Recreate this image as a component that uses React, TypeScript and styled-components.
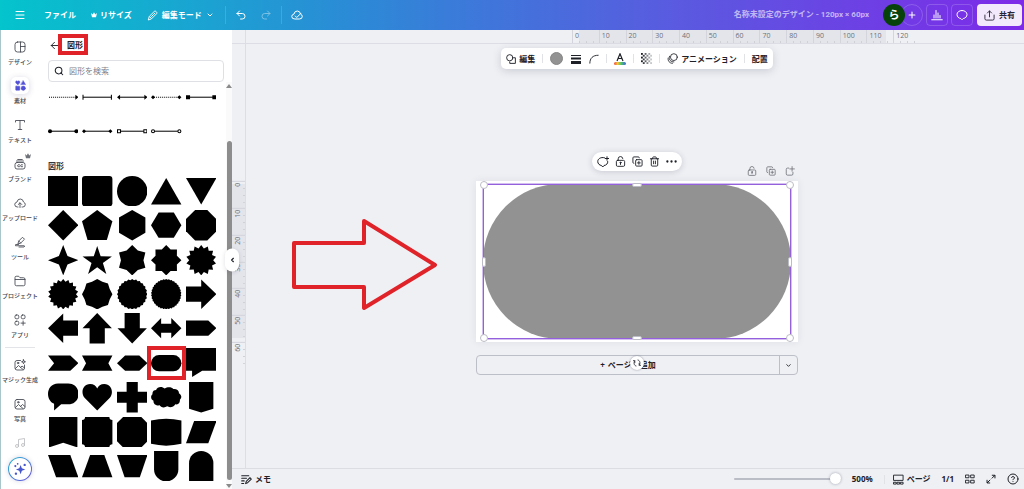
import React from "react";
import styled, { createGlobalStyle, css } from "styled-components";
import {
  ArrowLeft,
  ChevronDown,
  ChevronLeft,
  CircleHelp,
  CopyPlus,
  Menu,
  Music,
  Plus,
  Redo2,
  Search,
  Trash2,
  Undo2,
} from "lucide-react";

const GlobalStyle = createGlobalStyle`
  *, *::before, *::after { box-sizing: border-box; }
  html, body { margin: 0; padding: 0; }
  body {
    font-family: "Open Sans", "Noto Sans CJK JP", sans-serif;
    font-size: 8px;
    line-height: 10px;
    color: #1d2027;
    background: #eff0f4;
  }
  button, input { font: inherit; color: inherit; }
  svg { display: block; flex: none; }
`;

const RED = "#e02229";

/* ---------- shared ---------- */

const PlainButton = styled.button`
  display: flex;
  align-items: center;
  padding: 0;
  border: 0;
  background: none;
  white-space: nowrap;
  cursor: pointer;
`;

const Shell = styled.div`
  display: flex;
  flex-direction: column;
  height: 100vh;
  overflow: hidden;
`;

const Body = styled.div`
  display: flex;
  flex: 1;
  min-height: 0;
`;

type DrawProps = {
  size?: number;
  w?: number;
  fill?: string;
  children: React.ReactNode;
};

const Draw = ({ size = 12, w = 1.7, fill = "none", children }: DrawProps) => (
  <svg
    width={size}
    height={size}
    viewBox="0 0 24 24"
    fill={fill}
    stroke="currentColor"
    strokeWidth={w}
    strokeLinecap="round"
    strokeLinejoin="round"
    aria-hidden="true"
  >
    {children}
  </svg>
);

/* ---------- top bar ---------- */

const TopBar = styled.header`
  display: flex;
  align-items: center;
  flex: none;
  height: 30px;
  padding: 0 2px 0 14px;
  color: #fff;
  font-weight: 700;
  background: linear-gradient(90deg, #04c4cc 0%, #2b8bd6 34%, #5a5ae0 66%, #7d2ae8 100%);
`;

const MainMenu = styled.nav`
  display: flex;
  align-items: center;
  gap: 15px;
  margin-left: 18px;
`;

const MenuButton = styled(PlainButton)<{ $gap?: number }>`
  gap: ${(p) => p.$gap ?? 3}px;
`;

const BarGroup = styled.div`
  display: flex;
  align-items: center;
  gap: 13px;
  height: 18px;
  padding: 0 9px;
  border-left: 1px solid rgba(255, 255, 255, 0.15);
`;

const History = styled(BarGroup)`
  margin-left: 11px;
`;

const FadedButton = styled(PlainButton)`
  opacity: 0.4;
`;

const DocTitle = styled.div`
  margin-left: auto;
  color: rgba(255, 255, 255, 0.62);
  font-family: Roboto, "Noto Sans CJK JP", sans-serif;
  white-space: nowrap;
`;

const People = styled.div`
  display: flex;
  margin-left: 14px;
`;

const Avatar = styled.button`
  z-index: 1;
  width: 22px;
  height: 22px;
  padding: 0;
  border: 0;
  border-radius: 50%;
  color: #fff;
  background: #07420b;
  font-size: 11px;
  line-height: 20px;
`;

const AddPerson = styled(PlainButton)`
  justify-content: center;
  width: 22px;
  height: 22px;
  margin-left: -4px;
  border: 1px solid rgba(255, 255, 255, 0.18);
  border-radius: 50%;
`;

const SquareButton = styled(PlainButton)`
  justify-content: center;
  width: 22px;
  height: 22px;
  margin-left: 3px;
  border: 1px solid rgba(255, 255, 255, 0.18);
  border-radius: 4px;
`;

const ShareButton = styled(PlainButton)`
  justify-content: center;
  gap: 4px;
  width: 45px;
  height: 22px;
  margin-left: 4px;
  border-radius: 4px;
  color: #2a2536;
  background: #f2e9fd;
`;

const CrownMark = ({ size }: { size: number }) => (
  <svg width={size} height={size} viewBox="0 0 12 12" fill="currentColor" aria-hidden="true">
    <path d="M0 2 L3.400 5 L6 0.500 L8.600 5 L12 2 L10 10.500 H2 Z" />
  </svg>
);

const PencilMark = () => (
  <Draw size={11} w={2}>
    <path d="M3 21 L5 14 L16 3 Q18 1.500 20 3.500 L20.500 4 Q22.500 6 21 8 L10 19 Z" />
    <path d="M5 14 L10 19 M9 15 L17 7" />
  </Draw>
);

const LockMark = ({ size }: { size: number }) => (
  <Draw size={size} w={2}>
    <rect x="3" y="9.500" width="18" height="13" rx="2.500" />
    <path d="M7 9.500 V6 Q7 1.200 12 1.200 Q16.500 1.200 17 5.500 M12 18.500 V15" />
    <circle cx="12" cy="14.500" r="1.200" />
  </Draw>
);

const Header = () => (
  <TopBar>
    <PlainButton aria-label="メニュー">
      <Menu size={12} strokeWidth={2} />
    </PlainButton>
    <MainMenu>
      <MenuButton>ファイル</MenuButton>
      <MenuButton>
        <CrownMark size={6} />
        リサイズ
      </MenuButton>
      <MenuButton $gap={4}>
        <PencilMark />
        編集モード
        <ChevronDown size={8} strokeWidth={3} />
      </MenuButton>
    </MainMenu>
    <History>
      <PlainButton aria-label="元に戻す">
        <Undo2 size={12} />
      </PlainButton>
      <FadedButton aria-label="やり直し">
        <Redo2 size={12} />
      </FadedButton>
    </History>
    <BarGroup>
      <PlainButton aria-label="保存済み">
        <Draw size={12} w={2}>
          <path d="M7 20 Q1.500 20 1.500 15 Q1.500 11 6 10 Q7 4 12.500 4 Q18 4 19 10 Q22.500 11.500 22.500 15 Q22.500 20 17.500 20 Z" />
          <path d="M8.500 14 L11.500 17 L20 8.500" />
        </Draw>
      </PlainButton>
    </BarGroup>
    <DocTitle>名称未設定のデザイン - 120px × 60px</DocTitle>
    <People>
      <Avatar>ら</Avatar>
      <AddPerson aria-label="メンバーを追加">
        <Plus size={10} strokeWidth={2.5} />
      </AddPerson>
    </People>
    <SquareButton aria-label="分析">
      <Draw size={12} w={2}>
        <path d="M1.500 21.500 H22.500 M6 18 V12 M10 18 V3 M14 18 V8 M18 18 V13" />
      </Draw>
    </SquareButton>
    <SquareButton aria-label="コメント">
      <Draw size={12} w={2}>
        <path d="M12 3 C18 3 22 6.500 22 11 C22 15.500 18.500 18.500 14.500 19 L12 21.500 L9.500 19 C5.500 18.500 2 15.500 2 11 C2 6.500 6 3 12 3 Z" />
      </Draw>
    </SquareButton>
    <ShareButton>
      <Draw size={11} w={2}>
        <path d="M12 15 V2 M7.500 6.500 L12 2 L16.500 6.500 M2 11 V19 Q2 22 5 22 H19 Q22 22 22 19 V11" />
      </Draw>
      共有
    </ShareButton>
  </TopBar>
);

/* ---------- side rail ---------- */

const Rail = styled.nav`
  display: flex;
  flex-direction: column;
  align-items: center;
  flex: none;
  width: 40px;
  padding: 8px 1px 8px 0;
  border-left: 1px solid #a9c6ca;
  background: #fff;
`;

const RailList = styled.ul`
  display: flex;
  flex-direction: column;
  gap: 11px;
  flex: 1;
  min-height: 0;
  width: 100%;
  margin: 0;
  padding: 0;
  overflow: hidden;
  list-style: none;
`;

const RailDivider = styled.li`
  flex: none;
  height: 1px;
  margin: -3px 4px;
  background: #e3e4e8;
`;

const RailButton = styled.button<{ $faded?: boolean }>`
  display: flex;
  flex-direction: column;
  align-items: center;
  gap: 3px;
  width: 100%;
  height: 28px;
  padding: 0;
  border: 0;
  background: none;
  color: #41454e;
  font-size: 6px;
  font-weight: 500;
  line-height: 8px;
  white-space: nowrap;
  cursor: pointer;
  opacity: ${(p) => (p.$faded ? 0.35 : 1)};
`;

const RailIcon = styled.span<{ $active?: boolean }>`
  position: relative;
  display: grid;
  place-items: center;
  width: 18px;
  height: 18px;
  border-radius: 5px;
  ${(p) =>
    p.$active &&
    css`
      color: #5250d6;
      box-shadow: 0 1px 6px rgba(60, 60, 120, 0.2);
    `}
`;

const RailCrown = styled.span`
  position: absolute;
  top: -2px;
  right: -2px;
  opacity: 0.75;
`;

const MagicButton = styled.button`
  display: grid;
  place-items: center;
  flex: none;
  width: 24px;
  height: 24px;
  padding: 0;
  border: 1px solid transparent;
  border-radius: 50%;
  color: #4656cf;
  background:
    linear-gradient(#fff, #fff) padding-box,
    linear-gradient(135deg, #21b6d2, #6a4bd8) border-box;
  box-shadow: 0 0 5px rgba(60, 60, 120, 0.2);
`;

const railTop: { label: string; icon: React.ReactNode; active?: boolean; crown?: boolean }[] = [
  {
    label: "デザイン",
    icon: (
      <Draw>
        <rect x="2" y="2" width="20" height="20" rx="5" />
        <path d="M13 2 V22 M13 11 H22" />
      </Draw>
    ),
  },
  {
    label: "素材",
    active: true,
    icon: (
      <Draw size={11} w={1} fill="currentColor">
        <path d="M6 10.500 L2 6.500 Q0.500 4.500 2 2.500 Q4 1 6 3 Q8 1 10 2.500 Q11.500 4.500 10 6.500 Z" />
        <path d="M18 1.500 L23 10 H13 Z" />
        <rect x="1.500" y="13.500" width="9" height="9" rx="1" />
        <circle cx="18" cy="18" r="4.700" />
      </Draw>
    ),
  },
  {
    label: "テキスト",
    icon: (
      <Draw>
        <path d="M3 6 V3 H21 V6 M12 3 V21 M8.500 21 H15.500" />
      </Draw>
    ),
  },
  {
    label: "ブランド",
    crown: true,
    icon: (
      <Draw>
        <rect x="2" y="9" width="20" height="13" rx="4" />
        <path d="M5 6 H19 M7.500 3 H16.500 M11 13.500 Q7 12.500 7 15.500 Q7 18.500 11 17.500 M17 13.500 Q13 12.500 13 15.500 Q13 18.500 17 17.500" />
      </Draw>
    ),
  },
  {
    label: "アップロード",
    icon: (
      <Draw>
        <path d="M8 20 H7 Q1.500 20 1.500 15 Q1.500 11 6 10 Q7 4 12.500 4 Q18 4 19 10 Q22.500 11.500 22.500 15 Q22.500 20 17.500 20 H16 M12 21 V12 M8.500 15 L12 11.500 L15.500 15" />
      </Draw>
    ),
  },
  {
    label: "ツール",
    icon: (
      <Draw>
        <path d="M8 15 L9.500 10 L17 2.500 L21 6.500 L13.500 14 Z M9.500 10 L13.500 14 M9 17 Q2 16 2 18.500 Q2 20 8 19.500 H20 Q23 20 20 22 H10" />
      </Draw>
    ),
  },
  {
    label: "プロジェクト",
    icon: (
      <Draw>
        <path d="M2 9 V5 Q2 2.500 4.500 2.500 H8.500 Q10 2.500 11 4 L12 5.500 H19 Q22 5.500 22 8.500 V18.500 Q22 21.500 19 21.500 H5 Q2 21.500 2 18.500 V9 H22" />
      </Draw>
    ),
  },
  {
    label: "アプリ",
    icon: (
      <Draw>
        <rect x="2" y="2" width="7.500" height="7.500" rx="2.500" />
        <rect x="14.500" y="2" width="7.500" height="7.500" rx="2.500" />
        <rect x="2" y="14.500" width="7.500" height="7.500" rx="2.500" />
        <path d="M18.200 14 V22.500 M14 18.200 H22.500" />
      </Draw>
    ),
  },
];

const railBottom: { label: string; icon: React.ReactNode }[] = [
  {
    label: "マジック生成",
    icon: (
      <Draw>
        <path d="M13 3 H6 Q2 3 2 7 V18 Q2 22 6 22 H17 Q21 22 21 18 V12 M3 19 L9 13 L18 21 M13 17 L16 14 L21 18" />
        <path d="M19 1.500 L20 4.500 L23 5.500 L20 6.500 L19 9.500 L18 6.500 L15 5.500 L18 4.500 Z" />
        <circle cx="8" cy="8" r="1.500" />
      </Draw>
    ),
  },
  {
    label: "写真",
    icon: (
      <Draw>
        <rect x="2" y="3" width="20" height="19" rx="4" />
        <path d="M3 19 L9 13 L18 21 M13 17 L17 13 L22 17" />
        <circle cx="8.500" cy="8.500" r="1.500" />
      </Draw>
    ),
  },
];

const SideRail = () => (
  <Rail>
    <RailList>
      {railTop.map((item) => (
        <li key={item.label}>
          <RailButton>
            <RailIcon $active={item.active}>
              {item.icon}
              {item.crown && (
                <RailCrown>
                  <CrownMark size={6} />
                </RailCrown>
              )}
            </RailIcon>
            {item.label}
          </RailButton>
        </li>
      ))}
      <RailDivider />
      {railBottom.map((item) => (
        <li key={item.label}>
          <RailButton>
            <RailIcon>{item.icon}</RailIcon>
            {item.label}
          </RailButton>
        </li>
      ))}
      <li>
        <RailButton $faded aria-label="オーディオ">
          <RailIcon>
            <Music size={12} strokeWidth={1.7} />
          </RailIcon>
        </RailButton>
      </li>
    </RailList>
    <MagicButton aria-label="マジック">
      <Draw size={14} w={0} fill="currentColor">
        <path d="M13 5 L15.200 10.800 L21 13 L15.200 15.200 L13 21 L10.800 15.200 L5 13 L10.800 10.800 Z" />
        <circle cx="4" cy="7" r="1.800" />
        <circle cx="8" cy="3" r="1.500" />
        <circle cx="20" cy="5" r="2" />
        <circle cx="5" cy="20" r="2" />
      </Draw>
    </MagicButton>
  </Rail>
);

/* ---------- shapes panel ---------- */

const Panel = styled.aside`
  position: relative;
  display: flex;
  flex-direction: column;
  flex: none;
  width: 192px;
  background: #fff;
`;

const PanelHeader = styled.div`
  display: flex;
  align-items: center;
  gap: 7px;
  height: 30px;
  padding-left: 9px;
`;

const PanelTitle = styled.h2`
  position: relative;
  margin: 0;
  font-size: 8px;
  font-weight: 700;
`;

const HeaderMark = styled.span`
  position: absolute;
  inset: -6px -5px -5px -9px;
  border: 4px solid ${RED};
`;

const SearchBox = styled.label`
  display: flex;
  align-items: center;
  gap: 5px;
  flex: none;
  height: 22px;
  margin: 0 8px;
  padding: 0 5px;
  border: 1px solid #dfe0e5;
  border-radius: 4px;
`;

const SearchInput = styled.input`
  flex: 1;
  min-width: 0;
  padding: 0;
  border: 0;
  outline: 0;
  background: none;
  &::placeholder {
    color: #7d818b;
    opacity: 1;
  }
`;

const PanelScroll = styled.div`
  display: flex;
  flex: 1;
  min-height: 0;
`;

const PanelContent = styled.div`
  flex: 1;
  padding: 0 10px 0 8px;
  overflow: hidden;
`;

const ShapeGrid = styled.div`
  display: grid;
  grid-template-columns: repeat(5, 1fr);
  gap: 4px;
`;

const ShapeButton = styled.button`
  position: relative;
  aspect-ratio: 1;
  padding: 0;
  border: 0;
  background: none;
  color: #000;
  cursor: pointer;
  svg {
    width: 100%;
    height: 100%;
  }
`;

const ShapeMark = styled.span`
  position: absolute;
  inset: -2px -4px;
  border: 4px solid ${RED};
`;

const SectionTitle = styled.h3`
  margin: 14px 0 5px;
  color: #33363d;
  font-size: 8px;
  font-weight: 700;
`;

const ScrollBar = styled.div`
  display: flex;
  flex-direction: column;
  align-items: center;
  flex: none;
  width: 6px;
  padding: 2px 0 0;
  background: #fafafb;
  color: #8a8a8a;
`;

const ScrollThumb = styled.div`
  flex: 1;
  width: 5px;
  margin: 52px 0 4px;
  border-radius: 3px;
  background: #8d8d8d;
`;

const CollapseButton = styled(PlainButton)`
  position: absolute;
  z-index: 2;
  top: 50%;
  right: -7px;
  justify-content: center;
  width: 14px;
  height: 23px;
  border-radius: 7px;
  background: #fff;
  box-shadow: 0 1px 4px rgba(40, 40, 70, 0.15);
  transform: translateY(-50%);
`;

const star = (points: number, inner: number, radius = 15) =>
  Array.from({ length: points * 2 }, (_, i) => {
    const r = i % 2 ? radius * inner : radius;
    const a = (Math.PI * i) / points - Math.PI / 2;
    return `${(15 + r * Math.cos(a)).toFixed(2)},${(15 + r * Math.sin(a)).toFixed(2)}`;
  }).join(" ");

const poly = (points: string) => <polygon points={points} />;

const shapes: { name: string; body: React.ReactNode; marked?: boolean }[] = [
  { name: "正方形", body: <rect width="30" height="30" /> },
  { name: "角丸正方形", body: <rect width="30" height="30" rx="3" /> },
  { name: "円", body: <circle cx="15" cy="15" r="15" /> },
  { name: "三角形", body: poly("15,2 30,28 0,28") },
  { name: "逆三角形", body: poly("0,2 30,2 15,28") },
  { name: "ひし形", body: poly("15,0 30,15 15,30 0,15") },
  { name: "五角形", body: poly("15,0 30,11 24.500,29.500 5.500,29.500 0,11") },
  { name: "六角形", body: poly("15,0 28,7.500 28,22.500 15,30 2,22.500 2,7.500") },
  { name: "横六角形", body: poly("7.500,2.500 22.500,2.500 30,15 22.500,27.500 7.500,27.500 0,15") },
  { name: "八角形", body: poly("9,0 21,0 30,9 30,21 21,30 9,30 0,21 0,9") },
  { name: "四芒星", body: poly(star(4, 0.4)) },
  { name: "五芒星", body: poly("15,1 18.400,11.200 29.500,11.300 20.600,17.800 24,28.500 15,22 6,28.500 9.400,17.800 0.500,11.300 11.600,11.200") },
  { name: "六芒星", body: poly(star(6, 0.74)) },
  { name: "八芒星", body: poly(star(8, 0.76)) },
  { name: "十四芒星", body: poly(star(14, 0.79)) },
  { name: "十八芒星", body: poly(star(18, 0.84)) },
  { name: "八角星", body: poly(star(8, 0.89)) },
  { name: "バースト", body: poly(star(24, 0.93)) },
  { name: "シール", body: poly(star(34, 0.95)) },
  { name: "右矢印", body: poly("0,7.500 15,7.500 15,0.500 30,15 15,29.500 15,22.500 0,22.500") },
  { name: "左矢印", body: poly("30,7.500 15,7.500 15,0.500 0,15 15,29.500 15,22.500 30,22.500") },
  { name: "上矢印", body: poly("7.500,30 7.500,15 0.500,15 15,0 29.500,15 22.500,15 22.500,30") },
  { name: "下矢印", body: poly("7.500,0 7.500,15 0.500,15 15,30 29.500,15 22.500,15 22.500,0") },
  { name: "両矢印", body: poly("0,15 10,5 10,10.500 20,10.500 20,5 30,15 20,25 20,19.500 10,19.500 10,25") },
  { name: "ホームベース", body: poly("0,7.500 22,7.500 30,15 22,22.500 0,22.500") },
  { name: "シェブロン", body: poly("0,7.500 22,7.500 30,15 22,22.500 0,22.500 6,15") },
  { name: "リボン", body: poly("0,7.500 30,7.500 26,15 30,22.500 0,22.500 4,15") },
  { name: "細長い六角形", body: poly("0,15 8,7.500 22,7.500 30,15 22,22.500 8,22.500") },
  { name: "カプセル", marked: true, body: <rect y="7" width="30" height="16" rx="8" /> },
  { name: "四角い吹き出し", body: poly("0,0 30,0 30,22.500 16,22.500 6,28.500 6,22.500 0,22.500") },
  { name: "丸い吹き出し", body: <path d="M10 1.500 H20 C33.500 1.500 33.500 22 20 22 H13 L6 28 V21.500 C-3 18 -2 1.500 10 1.500 Z" /> },
  { name: "ハート", body: <path d="M15 28 L2.500 15.500 C-1.500 11 0.500 2 8 2 C11.500 2 14 4 15 6.500 C16 4 18.500 2 22 2 C29.500 2 31.500 11 27.500 15.500 Z" /> },
  { name: "十字", body: poly("9.500,0 20.500,0 20.500,9.500 30,9.500 30,20.500 20.500,20.500 20.500,30 9.500,30 9.500,20.500 0,20.500 0,9.500 9.500,9.500") },
  {
    name: "雲",
    body: (
      <path d="M5 8 C6 4.500 11 4 13.500 6.500 C16 4.500 20.500 4.500 22 7 C25 6.500 28 8.500 27.500 11 C30.500 12.500 30.500 16 28.500 17.500 C29 21 26 22.500 24 22 C22.500 25 18 25.500 16 24 C13 26 9.500 25 8.500 23 C5 23.500 2 21.500 2.500 18.500 C-0.500 17.500 -0.500 13 1.500 12 C1 9.500 3 8 5 8 Z" />
    ),
  },
  { name: "バナー", body: poly("3,0 27,0 27,26.500 15,30 3,26.500") },
  { name: "フラッグ", body: poly("1,0 29,0 29,30 15,25.500 1,30") },
  { name: "プレート", body: <path d="M3 0 H27 Q27 3 30 3 V27 Q27 27 27 30 H3 Q3 27 0 27 V3 Q3 3 3 0 Z" /> },
  { name: "角切り", body: poly("6,0 24,0 30,6 30,24 24,30 6,30 0,24 0,6") },
  { name: "たる", body: <path d="M0 3.500 Q15 0 30 3.500 V26.500 Q15 30 0 26.500 Z" /> },
  { name: "平行四辺形", body: poly("8,4 30,4 22,26 0,26") },
  { name: "逆平行四辺形", body: poly("0,4 22,4 30,26 8,26") },
  { name: "台形", body: poly("8,4 22,4 30,26 0,26") },
  { name: "逆台形", body: poly("0,4 30,4 22.500,26 7.500,26") },
  { name: "盾", body: <path d="M3 0 H27 V18 A12 12 0 0 1 3 18 Z" /> },
  { name: "アーチ", body: <path d="M3 30 V12 A12 12 0 0 1 27 12 V30 Z" /> },
];

const solid = <path d="M1 15 H29" stroke="currentColor" />;
const dotted = <path d="M1 15 H28" stroke="currentColor" strokeDasharray="1 1" />;

const lines: { name: string; body: React.ReactNode }[] = [
  { name: "点線矢印", body: <>{dotted}{poly("27,12.500 30,15 27,17.500")}</> },
  { name: "両端バー", body: <>{solid}<path d="M1 12.500 V17.500 M29 12.500 V17.500" stroke="currentColor" /></> },
  { name: "両端矢印", body: <>{solid}{poly("0,15 3,12.500 3,17.500")}{poly("30,15 27,12.500 27,17.500")}</> },
  { name: "点線ひし形", body: <>{dotted}{poly("0,15 2,13 4,15 2,17")}{poly("26,15 28,13 30,15 28,17")}</> },
  { name: "両端四角", body: <>{solid}<path d="M0 13 H4 V17 H0 Z M26 13 H30 V17 H26 Z" /></> },
  { name: "両端丸", body: <>{solid}<circle cx="2" cy="15" r="2" /><circle cx="28" cy="15" r="2" /></> },
  { name: "両端ひし形", body: <>{solid}{poly("0,15 2,13 4,15 2,17")}{poly("26,15 28,13 30,15 28,17")}</> },
  {
    name: "両端白四角",
    body: <>{solid}<path d="M0.500 13.500 H3.500 V16.500 H0.500 Z M26.500 13.500 H29.500 V16.500 H26.500 Z" fill="#fff" stroke="currentColor" /></>,
  },
  {
    name: "両端白丸",
    body: <>{solid}<g fill="#fff" stroke="currentColor"><circle cx="2" cy="15" r="1.500" /><circle cx="28" cy="15" r="1.500" /></g></>,
  },
];

const ShapesPanel = () => (
  <Panel>
    <PanelHeader>
      <PlainButton aria-label="戻る">
        <ArrowLeft size={11} strokeWidth={2} />
      </PlainButton>
      <PanelTitle>
        図形
        <HeaderMark />
      </PanelTitle>
    </PanelHeader>
    <SearchBox>
      <Search size={10} strokeWidth={2.5} />
      <SearchInput type="search" placeholder="図形を検索" aria-label="図形を検索" />
    </SearchBox>
    <PanelScroll>
      <PanelContent>
        <ShapeGrid>
          {lines.map((line) => (
            <ShapeButton key={line.name} aria-label={line.name}>
              <svg viewBox="0 0 30 30" fill="currentColor">{line.body}</svg>
            </ShapeButton>
          ))}
        </ShapeGrid>
        <SectionTitle>図形</SectionTitle>
        <ShapeGrid>
          {shapes.map((shape) => (
            <ShapeButton key={shape.name} aria-label={shape.name}>
              <svg viewBox="0 0 30 30" fill="currentColor">{shape.body}</svg>
              {shape.marked && <ShapeMark />}
            </ShapeButton>
          ))}
        </ShapeGrid>
      </PanelContent>
      <ScrollBar aria-hidden="true">
        <svg width="6" height="5" viewBox="0 0 6 5" fill="currentColor"><path d="M3 0 L6 4 H0 Z" /></svg>
        <ScrollThumb />
        <svg width="6" height="5" viewBox="0 0 6 5" fill="currentColor"><path d="M0 0 H6 L3 4 Z" /></svg>
      </ScrollBar>
    </PanelScroll>
    <CollapseButton aria-label="パネルを閉じる">
      <ChevronLeft size={7} strokeWidth={4} />
    </CollapseButton>
  </Panel>
);

/* ---------- editor ---------- */

const Editor = styled.main`
  display: grid;
  grid-template: 14px 1fr 21px / 14px 1fr;
  flex: 1;
  min-width: 0;
`;

const RulerCorner = styled.div`
  border-right: 1px solid #dddee5;
  border-bottom: 1px solid #dddee5;
`;

const TopRuler = styled.div`
  border-bottom: 1px solid #dddee5;
  overflow: hidden;
`;

const SideRuler = styled.div`
  border-right: 1px solid #dddee5;
  overflow: hidden;
`;

const TopScale = styled.div`
  display: grid;
  grid-template-columns: repeat(13, 1fr);
  width: 348px;
  height: 13px;
  margin-left: calc(50% - 63px);
  background: linear-gradient(90deg, transparent 7px, #e4e5eb 7px 314px, transparent 314px);
`;

const SideScale = styled.div`
  display: grid;
  grid-template-rows: repeat(7, 1fr);
  width: 13px;
  height: 188px;
  margin-top: 137px;
  background: linear-gradient(180deg, transparent 3px, #e4e5eb 3px 157px, transparent 157px);
`;

const TopTick = styled.span`
  padding-left: 2px;
  border-left: 1px solid #d3d4dc;
  color: #6d7078;
  font-size: 7px;
  line-height: 11px;
  background: repeating-linear-gradient(90deg, transparent 0 6px, #cfd0d8 6px 7px) left bottom / 21px 2px no-repeat;
`;

const SideTick = styled.span`
  display: flex;
  justify-content: flex-end;
  padding-bottom: 1px;
  border-bottom: 1px solid #d3d4dc;
  color: #6d7078;
  font-size: 7px;
  line-height: 11px;
  writing-mode: vertical-rl;
  transform: rotate(180deg);
  background: repeating-linear-gradient(0deg, transparent 0 6px, #cfd0d8 6px 7px) left bottom / 2px 21px no-repeat;
`;

const Canvas = styled.section`
  display: flex;
  flex-direction: column;
  align-items: center;
  min-width: 0;
  padding: 4px 0 0 4px;
  position: relative;
`;

const Toolbar = styled.div`
  display: flex;
  align-items: center;
  gap: 7px;
  height: 21px;
  padding: 0 5px;
  border-radius: 5px;
  background: #fff;
  box-shadow: 0 2px 8px rgba(40, 44, 70, 0.18);
`;

const ToolButton = styled(PlainButton)`
  gap: 3px;
  font-weight: 700;
`;

const ToolGroup = styled.div`
  display: flex;
  align-items: center;
  gap: 8px;
`;

const ToolDivider = styled.span`
  width: 1px;
  height: 9px;
  background: #e1e2e6;
`;

const Swatch = styled.button`
  width: 13px;
  height: 13px;
  padding: 0;
  border: 1px solid #858585;
  border-radius: 50%;
  background: #929292;
`;

const ObjectBar = styled.div`
  display: flex;
  align-items: center;
  gap: 6px;
  height: 19px;
  margin-top: 83px;
  padding: 0 5px;
  border-radius: 10px;
  background: #fff;
  box-shadow: 0 1px 6px rgba(40, 44, 70, 0.2);
`;

const Page = styled.div`
  position: relative;
  width: 322px;
  max-width: 100%;
  aspect-ratio: 2;
  margin-top: 10px;
  padding: 3px 7px;
  background: #fff;
  box-shadow: 0 0 8px rgba(40, 44, 70, 0.08);
`;

const PageActions = styled.div`
  position: absolute;
  right: 3px;
  bottom: calc(100% + 5px);
  display: flex;
  gap: 9px;
  color: #70737b;
`;

const Capsule = styled.div`
  position: relative;
  height: 100%;
  border-radius: 77px;
  background: #929292;
`;

const Selection = styled.div`
  position: absolute;
  inset: 0;
  border: 1px solid #9560dc;
  box-shadow: 0 0 0 1px #d3bff0;
`;

const Handle = styled.span<{ $x: number; $y: number; $w: number; $h: number }>`
  position: absolute;
  left: ${(p) => p.$x}%;
  top: ${(p) => p.$y}%;
  width: ${(p) => p.$w}px;
  height: ${(p) => p.$h}px;
  border: 1px solid #bcbcc6;
  border-radius: 4px;
  background: #fff;
  transform: translate(-50%, -50%);
`;

const RotateButton = styled(PlainButton)`
  position: absolute;
  z-index: 1;
  top: calc(100% + 14px);
  left: 50%;
  justify-content: center;
  width: 14px;
  height: 14px;
  border-radius: 50%;
  background: #fff;
  box-shadow: 0 0 2px rgba(40, 44, 70, 0.5);
  transform: translateX(-50%);
`;

const AddPage = styled.div`
  display: flex;
  width: 322px;
  max-width: 100%;
  height: 20px;
  margin-top: 13px;
  border: 1px solid #bcbfc8;
  border-radius: 4px;
`;

const AddPageButton = styled(PlainButton)`
  flex: 1;
  justify-content: center;
  gap: 3px;
  font-weight: 700;
`;

const AddPageMenu = styled(PlainButton)`
  justify-content: center;
  width: 18px;
  border-left: 1px solid #bcbfc8;
`;

const PointerArrow = styled.svg`
  position: absolute;
  top: 174px;
  left: 45px;
`;

const Footer = styled.footer`
  display: flex;
  align-items: center;
  grid-column: 1 / -1;
  padding: 0 5px 0 9px;
  border-top: 1px solid #dcdde3;
  font-weight: 700;
`;

const Zoom = styled.input`
  width: 107px;
  height: 12px;
  margin: 0 11px 0 auto;
  background: none;
  appearance: none;
  &::-webkit-slider-runnable-track {
    height: 2px;
    border-radius: 1px;
    background: #babdc6;
  }
  &::-webkit-slider-thumb {
    width: 11px;
    height: 11px;
    margin-top: -5px;
    border-radius: 50%;
    background: #fff;
    box-shadow: 0 0 3px rgba(40, 44, 70, 0.4);
    appearance: none;
  }
`;

const FooterItems = styled.div`
  display: flex;
  align-items: center;
  gap: 11px;
`;

const PagesGroup = styled.div`
  display: flex;
  align-items: center;
  gap: 8px;
`;

const checker = Array.from({ length: 6 }, (_, y) =>
  Array.from({ length: 6 }, (_, x) => ({ x, y }))
)
  .flat()
  .filter(({ x, y }) => (x + y) % 2 === 0);

const topMarks = Array.from({ length: 13 }, (_, i) => i * 10);
const sideMarks = topMarks.slice(0, 7);

const StyleBar = () => (
  <Toolbar>
    <ToolButton>
      <Draw size={10} w={2.2}>
        <circle cx="9" cy="9" r="7.500" />
        <path d="M19 9 H22.500 V22.500 H9 V19" />
      </Draw>
      編集
    </ToolButton>
    <ToolDivider />
    <ToolGroup>
      <Swatch aria-label="カラー" />
      <PlainButton aria-label="線のスタイル">
        <svg width="10" height="10" viewBox="0 0 10 10" fill="currentColor">
          <path d="M0 1 H10 V2 H0 Z M0 3.500 H10 V5.500 H0 Z M0 7 H10 V10 H0 Z" />
        </svg>
      </PlainButton>
      <PlainButton aria-label="角の丸み">
        <Draw size={10} w={2.2}>
          <path d="M2 22 C2 10 9 3 22 3" />
        </Draw>
      </PlainButton>
    </ToolGroup>
    <ToolDivider />
    <PlainButton aria-label="テキストカラー">
      <svg width="12" height="12" viewBox="0 0 12 12">
        <defs>
          <linearGradient id="rainbow">
            <stop offset="0" stopColor="#f0483e" />
            <stop offset="0.3" stopColor="#f6c431" />
            <stop offset="0.6" stopColor="#47c96b" />
            <stop offset="1" stopColor="#4a5be6" />
          </linearGradient>
        </defs>
        <path d="M3 8 L6 0.800 L9 8 M4 5.500 H8" fill="none" stroke="currentColor" strokeWidth="1.200" />
        <rect y="9" width="12" height="3" rx="1.500" fill="url(#rainbow)" />
      </svg>
    </PlainButton>
    <ToolDivider />
    <PlainButton aria-label="透明度">
      <svg width="11" height="11" viewBox="0 0 12 12" fill="currentColor">
        {checker.map(({ x, y }) => (
          <rect key={`${x}-${y}`} x={x * 2} y={y * 2} width="2" height="2" opacity={1 - x * 0.15} />
        ))}
      </svg>
    </PlainButton>
    <ToolDivider />
    <ToolButton>
      <Draw size={11} w={1.8}>
        <circle cx="15" cy="9" r="7.500" />
        <path d="M5.500 7 C2.500 14 8 20 15 19.500 M2.500 11 C1 17 6 23 12 22.500" />
      </Draw>
      アニメーション
    </ToolButton>
    <ToolDivider />
    <ToolButton>配置</ToolButton>
  </Toolbar>
);

const EditorView = () => (
  <Editor>
    <RulerCorner />
    <TopRuler>
      <TopScale>
        {topMarks.map((mark) => (
          <TopTick key={mark}>{mark}</TopTick>
        ))}
      </TopScale>
    </TopRuler>
    <SideRuler>
      <SideScale>
        {sideMarks.map((mark) => (
          <SideTick key={mark}>{mark}</SideTick>
        ))}
      </SideScale>
    </SideRuler>
    <Canvas>
      <StyleBar />
      <ObjectBar>
        <PlainButton aria-label="コメントを追加">
          <Draw size={12} w={2}>
            <path d="M15 3.500 C7 1.500 1.500 6 1.500 11 C1.500 15.500 5 18.500 9 19 L11.500 22 L14 19 C19 18.500 22 15 21.500 11 M20 1.500 V8.500 M16.500 5 H23.500" />
          </Draw>
        </PlainButton>
        <PlainButton aria-label="ロック">
          <LockMark size={11} />
        </PlainButton>
        <PlainButton aria-label="複製">
          <CopyPlus size={11} />
        </PlainButton>
        <PlainButton aria-label="削除">
          <Trash2 size={11} />
        </PlainButton>
        <PlainButton aria-label="その他">
          <Draw size={11} w={0} fill="currentColor">
            <circle cx="3" cy="12" r="2.500" />
            <circle cx="12" cy="12" r="2.500" />
            <circle cx="21" cy="12" r="2.500" />
          </Draw>
        </PlainButton>
      </ObjectBar>
      <Page>
        <PageActions>
          <PlainButton aria-label="ページをロック">
            <LockMark size={10} />
          </PlainButton>
          <PlainButton aria-label="ページを複製">
            <CopyPlus size={10} />
          </PlainButton>
          <PlainButton aria-label="ページを追加">
            <Draw size={10} w={2}>
              <path d="M9 5 H6 Q3 5 3 8 V19 Q3 22 6 22 H16 Q19 22 19 19 V15 M17 1.500 V12.500 M11.500 7 H22.500" />
            </Draw>
          </PlainButton>
        </PageActions>
        <Capsule>
          <Selection>
            <Handle $x={0} $y={0} $w={8} $h={8} />
            <Handle $x={100} $y={0} $w={8} $h={8} />
            <Handle $x={0} $y={100} $w={8} $h={8} />
            <Handle $x={100} $y={100} $w={8} $h={8} />
            <Handle $x={50} $y={0} $w={10} $h={4} />
            <Handle $x={50} $y={100} $w={10} $h={4} />
            <Handle $x={0} $y={50} $w={4} $h={10} />
            <Handle $x={100} $y={50} $w={4} $h={10} />
          </Selection>
        </Capsule>
        <RotateButton aria-label="回転">
          <Draw size={8} w={2.4}>
            <path d="M9 21 C3 20 1 11 5 6 M5.500 11 V5 H0.500 M15 3 C21 4 23 13 19 18 M18.500 13 V19 H23.500" />
          </Draw>
        </RotateButton>
      </Page>
      <AddPage>
        <AddPageButton>
          <span>+</span>
          ページを追加
        </AddPageButton>
        <AddPageMenu aria-label="ページの種類">
          <ChevronDown size={7} strokeWidth={3} />
        </AddPageMenu>
      </AddPage>
      <PointerArrow width="148" height="94" viewBox="0 0 148 94" fill="none" stroke={RED} strokeWidth="4" strokeLinejoin="round">
        <path d="M3 25 H73 V3 L144 47 L73 90 V69 H3 Z" />
      </PointerArrow>
    </Canvas>
    <Footer>
      <MenuButton $gap={3}>
        <Draw size={11} w={2.2}>
          <path d="M1.500 4 H17 M1.500 9.500 H12 M1.500 15 H7 M10 21 L11.500 16 L19.500 8 L22.500 11 L14.500 19 Z M1.500 20.500 H6" />
        </Draw>
        メモ
      </MenuButton>
      <Zoom type="range" min={10} max={500} defaultValue={500} aria-label="ズーム" />
      <FooterItems>
        <span>500%</span>
        <PagesGroup>
          <ToolDivider />
          <MenuButton>
            <Draw size={11} w={2}>
              <path d="M2 2.500 H22 V14 H2 Z" />
              <path d="M2 18 H7 V22 H2 Z M9.500 18 H14.500 V22 H9.500 Z M17 18 H22 V22 H17 Z" />
            </Draw>
            ページ
          </MenuButton>
        </PagesGroup>
        <span>1/1</span>
        <PlainButton aria-label="グリッド表示">
          <Draw size={10} w={2.2}>
            <path d="M2 2.500 H9.500 V9 H2 Z M14.500 2.500 H22 V9 H14.500 Z M2 15 H9.500 V21.500 H2 Z M14.500 15 H22 V21.500 H14.500 Z" />
          </Draw>
        </PlainButton>
        <PlainButton aria-label="全画面表示">
          <Draw size={10} w={2.4}>
            <path d="M15 3 H21.500 V9.500 M21 3.500 L14.500 10 M9 21.500 H2.500 V15 M3 21 L9.500 14.500" />
          </Draw>
        </PlainButton>
        <PlainButton aria-label="ヘルプ">
          <CircleHelp size={12} />
        </PlainButton>
      </FooterItems>
    </Footer>
  </Editor>
);

export default function App() {
  return (
    <Shell>
      <GlobalStyle />
      <Header />
      <Body>
        <SideRail />
        <ShapesPanel />
        <EditorView />
      </Body>
    </Shell>
  );
}
